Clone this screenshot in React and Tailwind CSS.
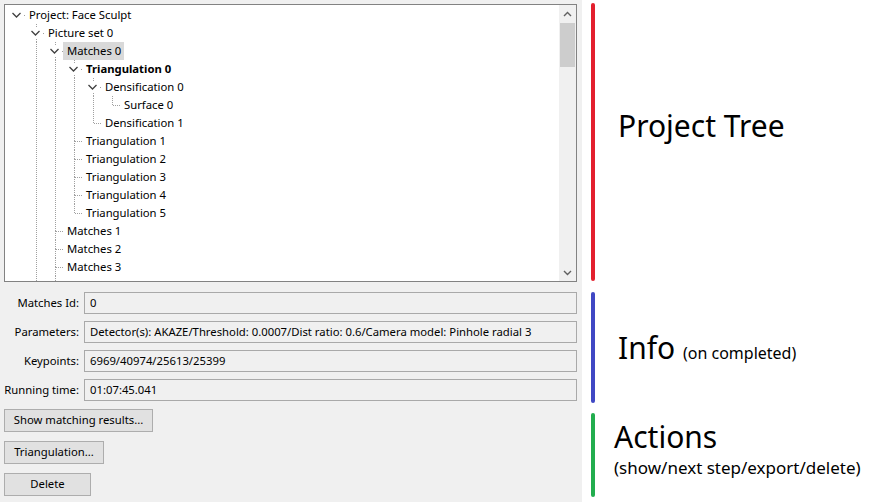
import React from "react";

const tree = [
  {
    label: "Project: Face Sculpt",
    children: [
      {
        label: "Picture set 0",
        more: true,
        children: [
          {
            label: "Matches 0",
            selected: true,
            children: [
              {
                label: "Triangulation 0",
                bold: true,
                children: [
                  { label: "Densification 0", children: [{ label: "Surface 0" }] },
                  { label: "Densification 1" },
                ],
              },
              { label: "Triangulation 1" },
              { label: "Triangulation 2" },
              { label: "Triangulation 3" },
              { label: "Triangulation 4" },
              { label: "Triangulation 5" },
            ],
          },
          { label: "Matches 1" },
          { label: "Matches 2" },
          { label: "Matches 3", more: true },
        ],
      },
    ],
  },
];

function flatten(nodes, depth, anc, out) {
  nodes.forEach((n, i) => {
    const hasNext = i < nodes.length - 1 || !!n.more;
    out.push({ node: n, depth, anc, hasNext, hasPrev: i > 0 });
    if (n.children && n.children.length) flatten(n.children, depth + 1, anc.concat(hasNext), out);
  });
  return out;
}

const rows = flatten(tree, 0, [], []);
const DOT = { stroke: "#a0a0a0", strokeDasharray: "1 1", strokeWidth: 1 };

function Cell({ full, top, bottom, horiz, chevron }) {
  return (
    <svg width="19" height="18" className="block shrink-0">
      {full && <line x1="10.5" y1="0" x2="10.5" y2="18" {...DOT} />}
      {top && <line x1="10.5" y1="0" x2="10.5" y2="10" {...DOT} />}
      {bottom && <line x1="10.5" y1="9" x2="10.5" y2="18" {...DOT} />}
      {horiz && <line x1="11" y1="9.5" x2="19" y2="9.5" {...DOT} />}
      {chevron && (
        <>
          <rect x="3" y="4" width="13" height="10" fill="#ffffff" />
          <path d="M5.5 7 L9.5 11 L13.5 7" fill="none" stroke="#404040" strokeWidth="1.3" />
        </>
      )}
    </svg>
  );
}

function TreeRow({ r }) {
  const cells = [];
  for (let k = 0; k < r.depth; k++) {
    cells.push(<Cell key={k} full={r.anc[k]} />);
  }
  const expanded = r.node.children && r.node.children.length > 0;
  cells.push(
    <Cell
      key="own"
      top={r.depth > 0 || r.hasPrev}
      bottom={r.hasNext}
      horiz
      chevron={expanded}
    />
  );
  return (
    <div className="flex h-[18px] items-center">
      {cells}
      <span
        className={
          "-ml-px h-[18px] whitespace-nowrap pl-[4px] pr-[3px] leading-[18px] " +
          (r.node.selected ? "bg-[#d9d9d9] " : "") +
          (r.node.bold ? "font-bold" : "")
        }
      >
        {r.node.label}
      </span>
    </div>
  );
}

function FillerRow() {
  return (
    <div className="flex h-[18px]">
      <Cell />
      <Cell full />
      <Cell full />
    </div>
  );
}

function Field({ label, value }) {
  return (
    <>
      <div className="whitespace-nowrap pr-[1px] text-right leading-[22px]">{label}</div>
      <div className="h-[22px] whitespace-nowrap border border-[#a9a9a9] bg-[#f0f0f0] pl-[5px] leading-[20px]">
        {value}
      </div>
    </>
  );
}

function Btn({ w, children }) {
  return (
    <div
      className={
        "ml-[4px] flex h-[23px] items-center justify-center whitespace-nowrap border border-[#adadad] bg-[#e1e1e1] " +
        w
      }
    >
      {children}
    </div>
  );
}

export default function App() {
  return (
    <div
      className="flex h-[502px] w-[878px] overflow-hidden bg-white text-black"
      style={{ fontFamily: '"Segoe UI", "Noto Sans", "Open Sans", sans-serif' }}
    >
      {/* Left panel */}
      <div className="flex w-[582px] shrink-0 flex-col bg-[#f0f0f0] pt-[4px] text-[11.3px]">
        <div className="ml-[4px] flex h-[278px] w-[573px] border border-[#828282] bg-white">
          <div className="flex-1 overflow-hidden pl-[2px] pt-[1px]">
            {rows.map((r, i) => (
              <TreeRow key={i} r={r} />
            ))}
            <FillerRow />
          </div>
          <div className="flex w-[17px] flex-col bg-[#f0f0f0]">
            <div className="flex h-[17px] items-center justify-center">
              <svg width="9" height="6">
                <path d="M1 5 L4.5 1.5 L8 5" fill="none" stroke="#606060" strokeWidth="1.4" />
              </svg>
            </div>
            <div className="mx-[1px] mt-px h-[44px] bg-[#cdcdcd]" />
            <div className="flex-1" />
            <div className="flex h-[17px] items-center justify-center">
              <svg width="9" height="6">
                <path d="M1 1 L4.5 4.5 L8 1" fill="none" stroke="#606060" strokeWidth="1.4" />
              </svg>
            </div>
          </div>
        </div>

        <div className="mt-[10px] grid grid-cols-[80px_493px] gap-x-[4px] gap-y-[7px]">
          <Field label="Matches Id:" value="0" />
          <Field
            label="Parameters:"
            value="Detector(s): AKAZE/Threshold: 0.0007/Dist ratio: 0.6/Camera model: Pinhole radial 3"
          />
          <Field label="Keypoints:" value="6969/40974/25613/25399" />
          <Field label="Running time:" value="01:07:45.041" />
        </div>

        <div className="mt-[8px] flex flex-col items-start gap-[9px]">
          <Btn w="w-[149px]">Show matching results...</Btn>
          <Btn w="w-[100px]">Triangulation...</Btn>
          <Btn w="w-[87px]">Delete</Btn>
        </div>
      </div>

      {/* Right annotations */}
      <div className="flex flex-1 flex-col pl-[9px] pt-[3px]">
        <div className="flex h-[278px]">
          <div className="w-[4px] rounded-full bg-[#e3202e]" />
          <div className="ml-[23px] mt-[108px] text-[30px] leading-[30px]">Project Tree</div>
        </div>
        <div className="mt-[11px] flex h-[111px]">
          <div className="w-[4px] rounded-full bg-[#4048c4]" />
          <div className="ml-[23px] mt-[41px] whitespace-nowrap text-[30px] leading-[30px]">
            Info <span className="text-[16px]">(on completed)</span>
          </div>
        </div>
        <div className="mt-[10px] flex h-[84px]">
          <div className="w-[4px] rounded-full bg-[#22ad4e]" />
          <div className="ml-[19px] mt-[9px] flex flex-col whitespace-nowrap">
            <div className="text-[30px] leading-[30px]">Actions</div>
            <div className="mt-[5px] text-[17px] leading-[22px]">(show/next step/export/delete)</div>
          </div>
        </div>
      </div>
    </div>
  );
}
